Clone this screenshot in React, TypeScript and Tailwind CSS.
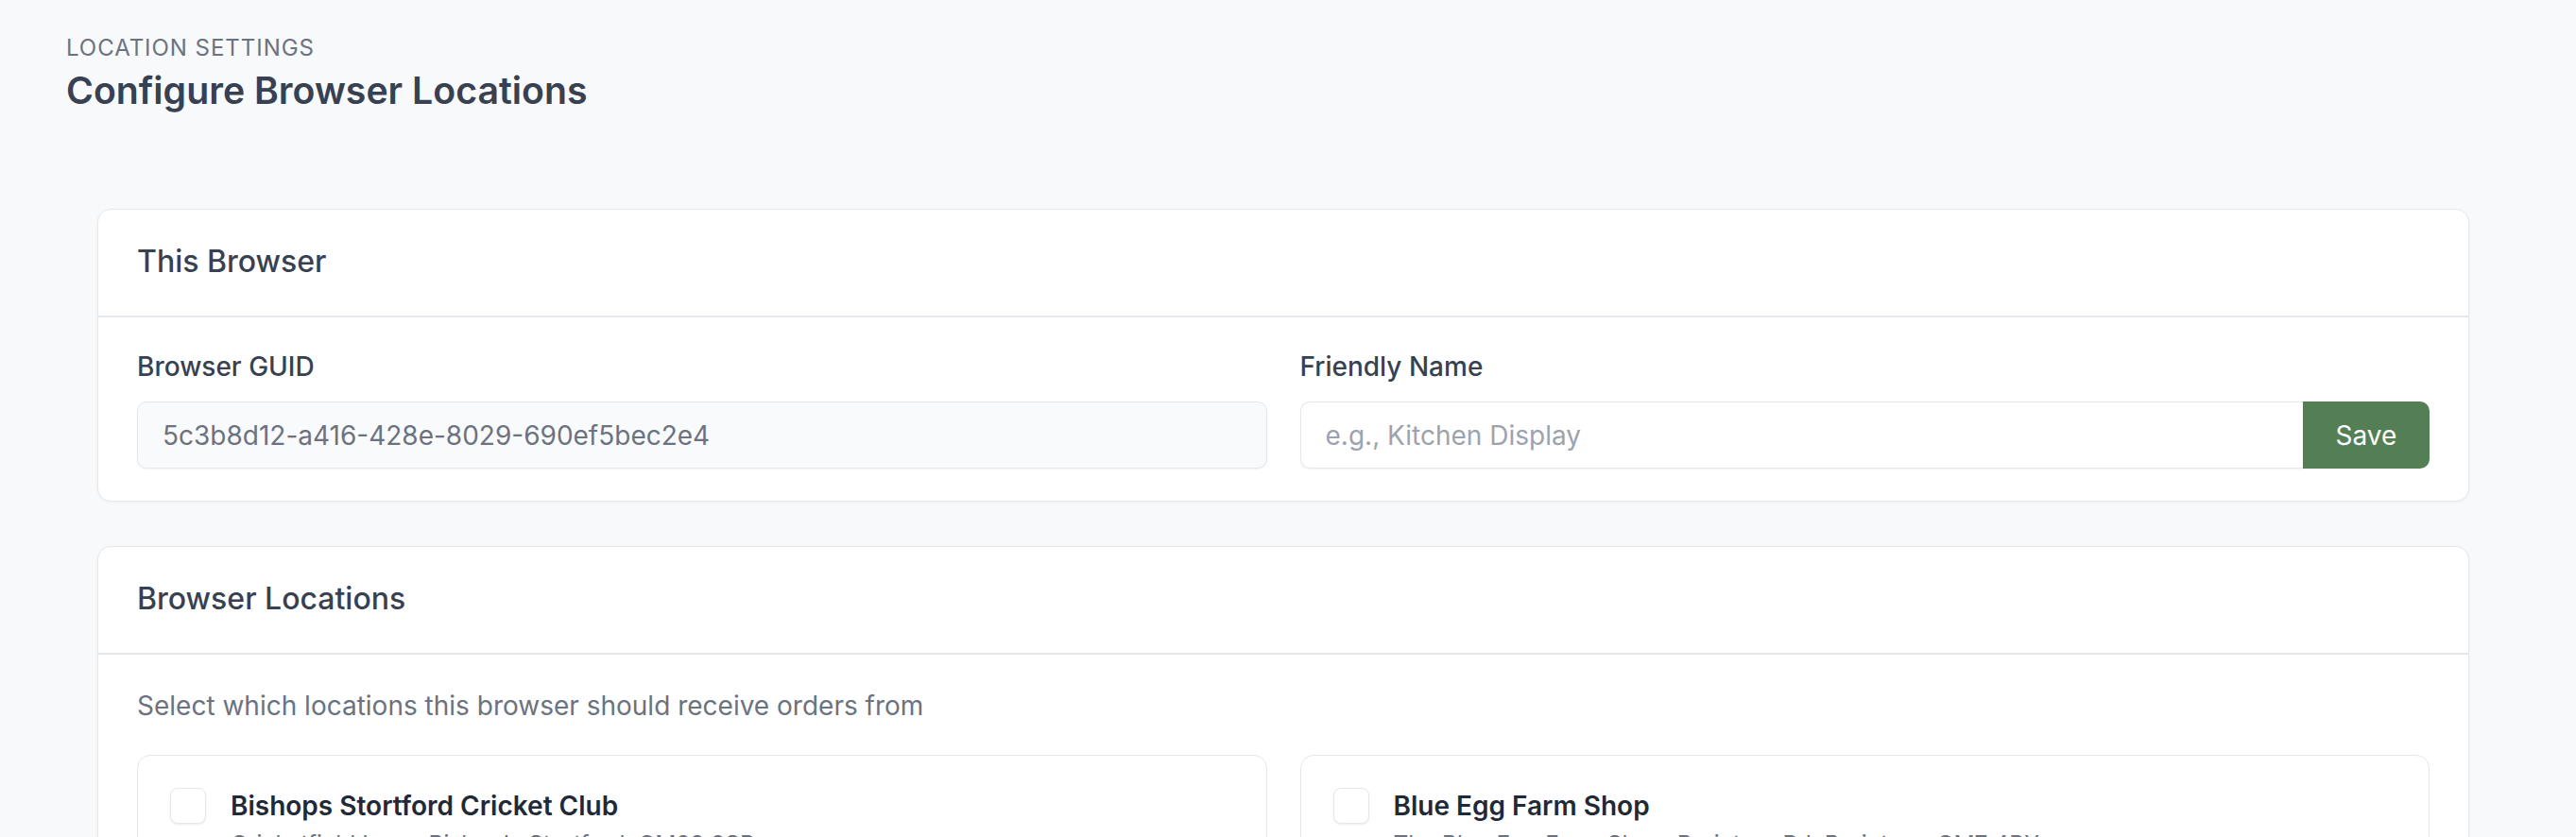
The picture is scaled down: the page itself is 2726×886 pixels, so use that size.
import * as React from "react";

const locations = [
  { id: "bscc", name: "Bishops Stortford Cricket Club", address: "Cricketfield Lane, Bishop's Stortford, CM23 2SP" },
  { id: "blue-egg", name: "Blue Egg Farm Shop", address: "The Blue Egg Farm Shop, Braintree Rd, Braintree, CM7 4PX" },
];

function Panel({ title, children }: { title: string; children: React.ReactNode }) {
  return (
    <div className="rounded-[14px] border border-[#e5e7eb] bg-white shadow-[0_1px_3px_rgba(0,0,0,0.04)]">
      <div className="border-b-2 border-[#e5e7eb] px-[41px] pt-[34px] pb-[36px]">
        <div className="text-[32px] font-medium leading-[42px] text-[#374151]">{title}</div>
      </div>
      {children}
    </div>
  );
}

export default function App() {
  const [selected, setSelected] = React.useState<Record<string, boolean>>({});

  return (
    <div className="min-h-screen bg-[#f8f9fb] font-['Inter',sans-serif]">
      <div className="px-[70px] pt-[35px]">
        <div className="text-[24px] uppercase leading-[32px] tracking-[0.04em] text-[#6b7280]">Location Settings</div>
        <h1 className="mt-[5px] text-[39.25px] font-semibold leading-[48px] text-[#374151]">Configure Browser Locations</h1>
      </div>

      <div className="ml-[103px] mr-[113px] mt-[101px] flex flex-col gap-[47px]">
        <Panel title="This Browser">
          <div className="grid grid-cols-2 gap-[35px] px-[41px] pt-[32px] pb-[34px]">
            <div>
              <div className="text-[28px] font-medium leading-[40px] text-[#374151]">Browser GUID</div>
              <input
                readOnly
                value="5c3b8d12-a416-428e-8029-690ef5bec2e4"
                className="mt-[17px] h-[71px] w-full rounded-[10px] border border-[#e5e7eb] bg-[#f9fafb] px-[26px] text-[28px] text-[#6b7280] shadow-[0_1px_2px_rgba(0,0,0,0.05)] outline-none"
              />
            </div>
            <div>
              <div className="text-[28px] font-medium leading-[40px] text-[#374151]">Friendly Name</div>
              <div className="mt-[17px] flex h-[71px]">
                <input
                  placeholder="e.g., Kitchen Display"
                  className="min-w-0 flex-1 rounded-l-[10px] border border-r-0 border-[#e5e7eb] bg-white px-[26px] text-[28px] text-[#374151] shadow-[0_1px_2px_rgba(0,0,0,0.05)] outline-none placeholder:text-[#9ca3af]"
                />
                <button className="w-[134px] rounded-r-[10px] bg-[#547f55] text-[28px] text-white">Save</button>
              </div>
            </div>
          </div>
        </Panel>

        <Panel title="Browser Locations">
          <div className="px-[41px] pt-[34px] pb-[40px]">
            <div className="text-[28px] leading-[40px] text-[#6b7280]">Select which locations this browser should receive orders from</div>
            <div className="mt-[32px] grid grid-cols-2 gap-[35px]">
              {locations.map((l) => (
                <label
                  key={l.id}
                  className="flex cursor-pointer items-start gap-[26px] rounded-[14px] border border-[#e5e7eb] bg-white p-[34px]"
                >
                  <input
                    type="checkbox"
                    className="sr-only"
                    checked={!!selected[l.id]}
                    onChange={(e) => setSelected((s) => ({ ...s, [l.id]: e.target.checked }))}
                  />
                  <span className="h-[38px] w-[38px] shrink-0 rounded-[8px] border border-[#e5e7eb] bg-white shadow-[0_1px_2px_rgba(0,0,0,0.08)]" />
                  <div className="min-w-0">
                    <div className="text-[28px] font-semibold leading-[38px] text-[#1f2937]">{l.name}</div>
                    <div className="mt-[4px] text-[24.5px] leading-[34px] text-[#6b7280]">{l.address}</div>
                  </div>
                </label>
              ))}
            </div>
          </div>
        </Panel>
      </div>
    </div>
  );
}
